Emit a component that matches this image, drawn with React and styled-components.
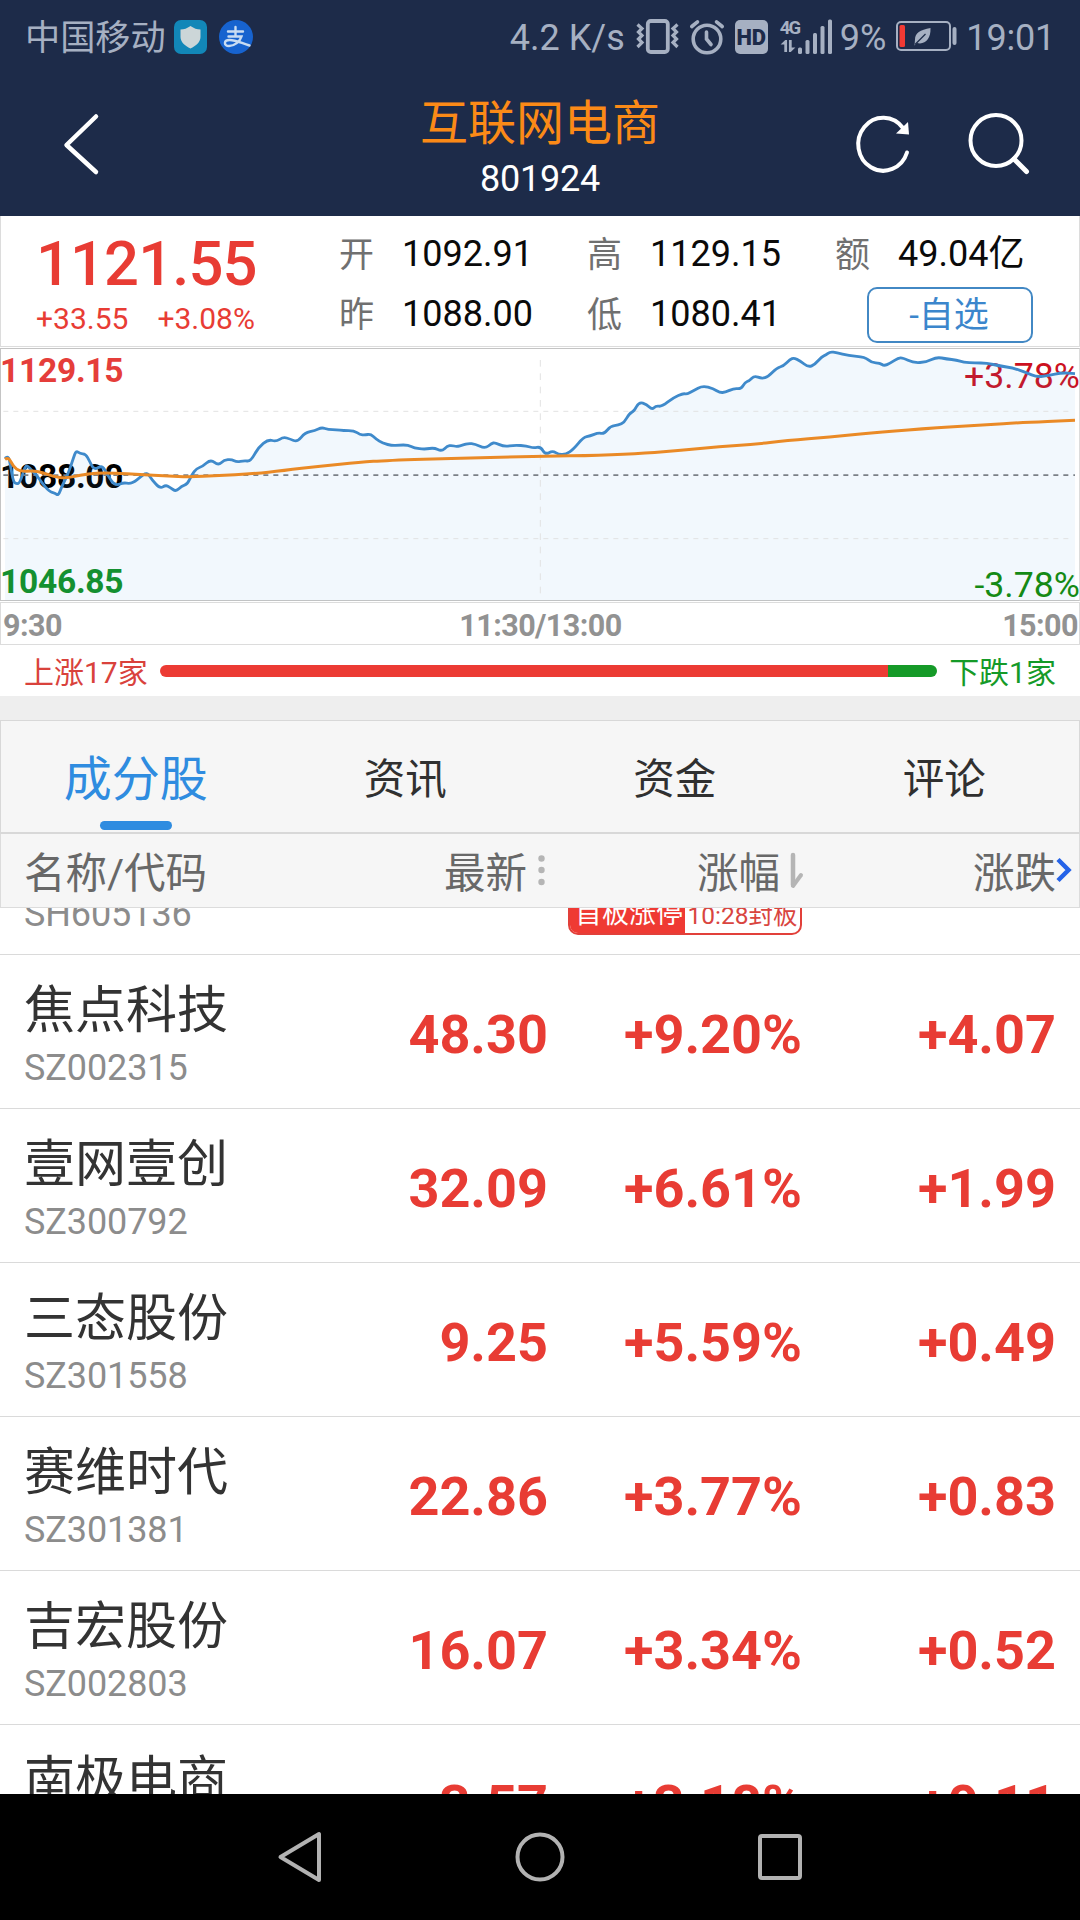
import React from 'react';
import styled, { createGlobalStyle } from 'styled-components';

const RED = '#e83c34';
const BLUE = '#2f8ce0';
const STATUS = '#a6b0c2';

const Global = createGlobalStyle`
  *, *::before, *::after { box-sizing: border-box; }
  body { margin: 0; background: #fff; }
`;

const Screen = styled.div`
  width: 1080px;
  height: 1920px;
  display: flex;
  flex-direction: column;
  overflow: hidden;
  background: #fff;
  font-family: Roboto, 'Noto Sans CJK SC', sans-serif;
  white-space: nowrap;
`;

const TopArea = styled.header`
  flex: none;
  height: 216px;
  background: #1d2b49;
  display: flex;
  flex-direction: column;
`;

const StatusBar = styled.div`
  height: 74px;
  padding: 0 25px 0 25px;
  display: flex;
  justify-content: space-between;
  color: ${STATUS};
  font-size: 36px;
`;

const StatusGroup = styled.div`
  display: flex;
  align-items: center;
`;

const StatusText = styled.span`
  padding-top: 2px;
  font-size: ${(p) => p.$size || 36}px;
  line-height: 74px;
  letter-spacing: ${(p) => p.$spacing || 0}px;
  margin-left: ${(p) => p.$left || 0}px;
`;

const Glyph = styled.svg`
  display: block;
  flex: none;
  overflow: visible;
  margin-left: ${(p) => p.$left || 0}px;
`;

const TitleBar = styled.div`
  flex: 1;
  display: grid;
  grid-template-columns: 300px 1fr 300px;
`;

const BackSlot = styled.div`
  padding: 40px 0 0 62px;
`;

const TitleBlock = styled.div`
  display: flex;
  flex-direction: column;
  align-items: center;
`;

const Title = styled.div`
  margin-top: 22px;
  font-size: 48px;
  line-height: 56px;
  color: #fb8a17;
`;

const TitleCode = styled.div`
  margin-top: 6px;
  font-size: 36px;
  line-height: 42px;
  letter-spacing: -0.2px;
  color: #fff;
`;

const Actions = styled.div`
  display: flex;
  align-items: flex-start;
  padding: 40px 0 0 74px;
  gap: 58px;
`;

const Quote = styled.section`
  flex: none;
  height: 131px;
  border: 1px solid #dcdcdc;
  border-top: 0;
  display: flex;
`;

const PriceBlock = styled.div`
  width: 338px;
  padding: 12px 0 0 35px;
  color: ${RED};
`;

const Price = styled.div`
  font-size: 61.5px;
  font-weight: 500;
  line-height: 72px;
  letter-spacing: -0.9px;
`;

const Deltas = styled.div`
  display: flex;
  gap: 29px;
  font-size: 30px;
  line-height: 36px;
  margin-top: 1px;
`;

const Stats = styled.div`
  display: grid;
  grid-template-columns: 248px 248px 230px;
  grid-template-rows: 60px 60px;
  padding-top: 8px;
`;

const Stat = styled.div`
  display: flex;
  align-items: center;
  gap: 28px;
  font-size: 36px;
  line-height: 60px;
  color: #0a0a0a;
`;

const StatLabel = styled.span`
  padding-top: 3px;
  font-size: 35px;
  line-height: 57px;
  color: #707070;
`;

const WatchButton = styled.button`
  width: 166px;
  height: 56px;
  margin: 3px 0 0 32px;
  padding: 2px 2px 0 0;
  border: 2px solid #4288c4;
  border-radius: 10px;
  background: #fff;
  font: 400 35px/50px Roboto, 'Noto Sans CJK SC', sans-serif;
  color: #3b86cc;
`;

const ChartPanel = styled.section`
  flex: none;
  position: relative;
  height: 253px;
  margin-top: 1px;
  border: 1px solid #c4c4c4;
  border-right-color: #dcdcdc;
`;

const ChartDrawing = styled.svg`
  display: block;
  position: relative;
  margin: -1px;
`;

const ChartLabel = styled.span`
  position: absolute;
  ${(p) => p.$side}: -1px;
  top: ${(p) => p.$top}px;
  color: ${(p) => p.$color};
  font-size: ${(p) => (p.$side === 'left' ? 33.5 : 35.7)}px;
  font-weight: ${(p) => (p.$side === 'left' ? 700 : 400)};
  letter-spacing: ${(p) => (p.$side === 'left' ? -0.25 : 0)}px;
  line-height: 40px;
`;

const TimeAxis = styled.div`
  flex: none;
  height: 43px;
  margin-top: 1px;
  border: 1px solid #dcdcdc;
  padding: 0 1px 0 2px;
  display: grid;
  grid-template-columns: 1fr auto 1fr;
  font-size: 30.5px;
  font-weight: 700;
  line-height: 46px;
  letter-spacing: -0.55px;
  color: #929292;
`;

const EndTime = styled.span`
  text-align: right;
`;

const Breadth = styled.div`
  flex: none;
  height: 51px;
  padding: 5px 24px 0;
  display: flex;
  align-items: center;
  gap: 12px;
  font-size: 30px;
  line-height: 46px;
`;

const BreadthText = styled.span`
  color: ${(p) => p.$color};
`;

const BreadthBar = styled.div`
  flex: 1;
  height: 12px;
  margin-top: -4px;
  border-radius: 6px;
  overflow: hidden;
  display: flex;
`;

const BreadthPart = styled.div`
  flex: ${(p) => p.$share};
  background: ${(p) => p.$color};
`;

const Gap = styled.div`
  flex: none;
  height: 24px;
  background: #eeeeee;
`;

const Tabs = styled.nav`
  flex: none;
  height: 114px;
  border: 1px solid #d8d8d8;
  border-bottom-width: 2px;
  background: #f6f6f6;
  display: grid;
  grid-template-columns: repeat(4, 1fr);
`;

const Tab = styled.div`
  display: flex;
  flex-direction: column;
  align-items: center;
  padding-top: 24px;
  font-size: ${(p) => (p.$active ? 48 : 41.5)}px;
  line-height: 70px;
  color: ${(p) => (p.$active ? BLUE : '#303030')};
`;

const TabMark = styled.div`
  width: 72px;
  height: 9px;
  margin-top: 6px;
  border-radius: 5px;
  background: ${BLUE};
`;

const TableHead = styled.div`
  flex: none;
  height: 74px;
  border: 1px solid #dcdcdc;
  border-top: 0;
  background: #f6f6f6;
  display: grid;
  grid-template-columns: 1fr 250px 251px 246px 23px;
  grid-template-rows: 73px;
  padding-left: 23px;
  font-size: 41.5px;
  line-height: 80px;
  color: #686868;
`;

const HeadCell = styled.div`
  display: flex;
  justify-content: ${(p) => (p.$start ? 'flex-start' : 'flex-end')};
`;

const List = styled.div`
  flex: 1;
  min-height: 0;
  overflow: hidden;
`;

const Row = styled.div`
  height: 154px;
  border-bottom: 1px solid #dadada;
  display: grid;
  grid-template-columns: 1fr 250px 254px 254px;
  padding: 0 24px;
`;

const ScrolledRow = styled(Row)`
  height: 47px;
  grid-template-rows: 46px;
  align-items: end;
`;

const NameCell = styled.div`
  padding-top: 23px;
`;

const Name = styled.div`
  font-size: 51px;
  line-height: 66px;
  color: #333;
`;

const Code = styled.div`
  font-size: 36px;
  line-height: 42px;
  margin-top: 3px;
  letter-spacing: -0.1px;
  color: #8c8c8c;
`;

const ScrolledCode = styled(Code)`
  margin: 0 0 19px;
`;

const Value = styled.div`
  text-align: right;
  font-size: 54px;
  font-weight: 700;
  line-height: 160px;
  color: ${RED};
`;

const Badge = styled.div`
  grid-column: 3;
  justify-self: end;
  width: 234px;
  height: 40px;
  margin-bottom: 19px;
  border: 2px solid #e2403a;
  border-radius: 10px;
  overflow: hidden;
  display: flex;
  font-size: 27px;
  line-height: 35px;
`;

const BadgeTag = styled.span`
  width: 115px;
  padding-left: 5px;
  background: #ef3a33;
  color: #fff;
`;

const BadgeTime = styled.span`
  flex: 1;
  text-align: center;
  font-size: 24.5px;
  line-height: 37px;
  color: #d9453f;
`;

const NavBar = styled.footer`
  flex: none;
  height: 126px;
  background: #000;
  display: flex;
  justify-content: center;
  align-items: center;
  gap: 190px;
`;

/* Intraday samples, three units per pixel in both directions. */
const PRICE = [
  [15, 355], [25, 345], [32, 380], [40, 425], [50, 432], [60, 428], [75, 380], [82, 376], [95, 392], [110, 405],
  [125, 428], [148, 455], [165, 459], [175, 467], [185, 440], [205, 400], [220, 355], [228, 332], [240, 341],
  [257, 342], [268, 362], [282, 390], [305, 377], [315, 390], [335, 425], [350, 436], [370, 428], [390, 431],
  [405, 424], [420, 412], [441, 396], [455, 418], [480, 446], [497, 435], [510, 442], [528, 455], [545, 438],
  [562, 433], [575, 405], [590, 385], [607, 380], [632, 358], [655, 376], [672, 360], [695, 358], [710, 366],
  [732, 362], [752, 364], [775, 322], [805, 298], [828, 305], [850, 291], [870, 297], [892, 306], [915, 278],
  [945, 272], [965, 262], [985, 269], [1010, 269], [1030, 272], [1062, 272], [1080, 284],
  [1095, 285], [1112, 282], [1128, 297], [1148, 310], [1178, 317], [1195, 315], [1225, 315], [1242, 324],
  [1275, 328], [1302, 323], [1325, 334], [1342, 318], [1355, 316], [1370, 320], [1390, 315], [1405, 310],
  [1425, 312], [1455, 326], [1475, 310], [1485, 308], [1512, 320], [1545, 315], [1580, 318], [1600, 324],
  [1622, 320], [1636, 344], [1658, 332], [1676, 344], [1698, 343], [1720, 328], [1750, 292], [1770, 288],
  [1795, 278], [1812, 282], [1832, 258], [1855, 256], [1873, 247], [1888, 220], [1902, 214], [1917, 186],
  [1940, 193], [1956, 209], [1968, 197], [1985, 200], [2020, 173], [2050, 160], [2060, 163], [2080, 152],
  [2108, 137], [2140, 146], [2160, 158],
  [2175, 157], [2202, 145], [2223, 147], [2235, 127], [2248, 122], [2263, 107], [2285, 116], [2305, 110],
  [2330, 84], [2350, 78], [2370, 58], [2382, 54], [2400, 62], [2425, 82], [2445, 73], [2465, 50], [2478, 45],
  [2490, 35], [2510, 38], [2545, 47], [2595, 51], [2615, 68], [2640, 69], [2652, 78], [2670, 70], [2695, 54],
  [2708, 53], [2740, 69], [2780, 66], [2810, 51], [2840, 57], [2870, 60], [2890, 67], [2925, 69], [2960, 69],
  [3000, 78], [3040, 84], [3080, 98], [3110, 111], [3145, 107], [3185, 98], [3225, 101],
];

const AVERAGE = [
  [15, 358], [25, 350], [40, 380], [60, 395], [100, 392], [130, 398], [160, 410], [200, 415], [240, 405],
  [290, 399], [340, 399], [420, 404], [500, 408], [570, 411], [650, 407], [760, 401], [850, 392], [960, 378],
  [1080, 367], [1160, 361], [1380, 354], [1620, 349], [1800, 346], [1940, 339], [2040, 331], [2160, 320],
  [2260, 313], [2360, 302], [2490, 291], [2610, 279], [2760, 267], [2960, 254], [3060, 248], [3225, 241],
];

/* Midpoint-smoothed path through the samples. */
const smooth = (pts) => {
  let d = `M${pts[0].join(' ')}`;
  for (let i = 1; i < pts.length - 1; i += 1) {
    const [x, y] = pts[i];
    const [nx, ny] = pts[i + 1];
    d += ` Q${x} ${y} ${(x + nx) / 2} ${(y + ny) / 2}`;
  }
  return `${d} L${pts[pts.length - 1].join(' ')}`;
};

const STOCKS = [
  ['焦点科技', 'SZ002315', '48.30', '+9.20%', '+4.07'],
  ['壹网壹创', 'SZ300792', '32.09', '+6.61%', '+1.99'],
  ['三态股份', 'SZ301558', '9.25', '+5.59%', '+0.49'],
  ['赛维时代', 'SZ301381', '22.86', '+3.77%', '+0.83'],
  ['吉宏股份', 'SZ002803', '16.07', '+3.34%', '+0.52'],
  ['南极电商', '', '3.57', '+3.18%', '+0.11'],
];

function ShieldIcon() {
  return (
    <Glyph $left={8} width="33" height="34" viewBox="0 0 33 34">
      <rect width="33" height="34" rx="7" fill="#1287b8" />
      <path d="M16.500 6 C20 8.500 23 9.500 26.500 9.500 V17 C26.500 22 22 26 16.500 28.500 C11 26 6.500 22 6.500 17 V9.500 C10 9.500 13 8.500 16.500 6Z" fill="#ccd6d8" />
    </Glyph>
  );
}

function PayIcon() {
  return (
    <Glyph $left={12} width="34" height="34" viewBox="0 0 34 34">
      <circle cx="17" cy="17" r="17" fill="#1763cf" />
      <g fill="none" stroke="#c9dcf2" strokeWidth="2.400" strokeLinecap="round">
        <path d="M9 11.500 H24 M16.500 7 V16 M9.500 16.500 H22.500 C21 21.500 15.500 26 10 26 C4.500 26 4.500 20 10.500 20 C17 20 22 23 30.500 25.500" />
      </g>
    </Glyph>
  );
}

function VibrateIcon() {
  return (
    <Glyph $left={11} width="43" height="36" viewBox="0 0 43 36" fill="none" stroke={STATUS}>
      <rect x="11.800" y="2" width="20" height="31" rx="3" strokeWidth="3.800" />
      <path d="M1.500 5.500 L6 9.500 L2.500 13 L6 16.500 L2.500 20 L6 23.500 L1.500 28 M41.500 5.500 L37 9.500 L40.500 13 L37 16.500 L40.500 20 L37 23.500 L41.500 28" strokeWidth="3.200" />
    </Glyph>
  );
}

function AlarmIcon() {
  return (
    <Glyph $left={11} width="34" height="37" viewBox="0 0 34 37" fill="none" stroke={STATUS} strokeWidth="3.600">
      <circle cx="17" cy="20" r="13.800" />
      <path d="M16.500 13 V20 L21 25.500 M1.800 7.500 L7.500 2.800 M32.200 7.500 L26.500 2.800" strokeLinecap="round" />
    </Glyph>
  );
}

const HdBadge = styled.span`
  width: 33px;
  height: 34px;
  margin-left: 11px;
  border-radius: 5px;
  background: ${STATUS};
  color: #1d2b49;
  font-size: 22px;
  font-weight: 900;
  line-height: 35px;
  text-align: center;
`;

const Network = styled.span`
  width: 18px;
  margin: -3px 0 0 12px;
  display: flex;
  flex-direction: column;
  gap: 2px;
  font-size: 18.5px;
  font-weight: 700;
  line-height: 19px;
  letter-spacing: -1.8px;
`;

function SignalIcon() {
  return (
    <Glyph width="35" height="37" viewBox="0 0 35 37" fill={STATUS}>
      <rect x="0" y="28.500" width="4" height="6.500" rx="1.500" />
      <rect x="7.500" y="21" width="4" height="14" rx="1.500" />
      <rect x="15" y="14" width="4" height="21" rx="1.500" />
      <rect x="22.500" y="7" width="4" height="28" rx="1.500" />
      <rect x="30" y="0.500" width="4" height="34.500" rx="1.500" />
    </Glyph>
  );
}

function BatteryIcon() {
  return (
    <Glyph $left={10} width="61" height="32" viewBox="0 0 61 32">
      <rect x="1" y="1" width="53" height="28" rx="4" fill="none" stroke={STATUS} strokeWidth="2" />
      <rect x="3.500" y="4" width="5.500" height="22" rx="1.500" fill="#f13a34" />
      <rect x="56.500" y="6" width="4" height="18" rx="2" fill={STATUS} />
      <path d="M34.500 7 C24 9 19 12 19 18.500 L18.500 24.500 L21 22 C29 24 35 18 34.500 7Z" fill={STATUS} />
      <path d="M19 23.500 L29.500 13" stroke="#1d2b49" strokeWidth="1.200" />
    </Glyph>
  );
}

export default function App() {
  const pricePath = smooth(PRICE);
  return (
    <Screen>
      <Global />
      <TopArea>
        <StatusBar>
          <StatusGroup>
            <StatusText $size={35.2}>中国移动</StatusText>
            <ShieldIcon />
            <PayIcon />
          </StatusGroup>
          <StatusGroup>
            <StatusText>4.2 K/s</StatusText>
            <VibrateIcon />
            <AlarmIcon />
            <HdBadge>HD</HdBadge>
            <Network>
              <span>4G</span>
              <Glyph width="16" height="12" viewBox="0 0 16 13" fill={STATUS}>
                <path d="M0 5 L5 0 H7 V13 H4 V5Z M9 0 H12 V8 H16 L11 13 H9Z" />
              </Glyph>
            </Network>
            <SignalIcon />
            <StatusText $left={7}>9%</StatusText>
            <BatteryIcon />
            <StatusText $left={9} $spacing={-0.2}>19:01</StatusText>
          </StatusGroup>
        </StatusBar>
        <TitleBar>
          <BackSlot>
            <Glyph width="40" height="62" viewBox="0 0 40 62" fill="none" stroke="#fff" strokeWidth="4.500" strokeLinecap="round" strokeLinejoin="round">
              <path d="M34 2.500 L4.500 31 L34 58" />
            </Glyph>
          </BackSlot>
          <TitleBlock>
            <Title>互联网电商</Title>
            <TitleCode>801924</TitleCode>
          </TitleBlock>
          <Actions>
            <Glyph width="56" height="62" viewBox="0 0 56 62" fill="none" stroke="#fff" strokeWidth="4" strokeLinecap="round">
              <path d="M53 38.500 A25 26.500 0 1 1 49 14" />
              <path d="M42 19.500 L55 20.500 L54 8Z" fill="#fff" stroke="none" />
            </Glyph>
            <Glyph width="62" height="62" viewBox="0 0 62 62" fill="none" stroke="#fff" strokeWidth="4" strokeLinecap="round">
              <circle cx="28" cy="26.500" r="25.500" />
              <path d="M46 45 L58.500 57.500" strokeWidth="5" />
            </Glyph>
          </Actions>
        </TitleBar>
      </TopArea>

      <Quote>
        <PriceBlock>
          <Price>1121.55</Price>
          <Deltas>
            <span>+33.55</span>
            <span>+3.08%</span>
          </Deltas>
        </PriceBlock>
        <Stats>
          <Stat><StatLabel>开</StatLabel>1092.91</Stat>
          <Stat><StatLabel>高</StatLabel>1129.15</Stat>
          <Stat><StatLabel>额</StatLabel>49.04亿</Stat>
          <Stat><StatLabel>昨</StatLabel>1088.00</Stat>
          <Stat><StatLabel>低</StatLabel>1080.41</Stat>
          <WatchButton>-自选</WatchButton>
        </Stats>
      </Quote>

      <ChartPanel>
        <ChartLabel $side="left" $top={2} $color="#e53e3a">1129.15</ChartLabel>
        <ChartLabel $side="left" $top={108} $color="#000">1088.00</ChartLabel>
        <ChartLabel $side="right" $top={7} $color="#cc1020">+3.78%</ChartLabel>
        <ChartDrawing width="1080" height="253" viewBox="0 24 3240 759" fill="none">
          <path d={`${pricePath} V781 H15Z`} fill="#4a9be8" fillOpacity="0.075" />
          <g stroke="#e2e2e2" strokeWidth="3">
            <path d="M10 214 H3205 M10 596 H3205" strokeDasharray="15 15" />
            <path d="M1621 60 V770" strokeDasharray="20 20" />
          </g>
          <path d="M10 405.500 H3225" stroke="#7b8086" strokeWidth="5" strokeDasharray="15 15" />
          <path d={pricePath} stroke="#3f8acb" strokeWidth="8.500" strokeLinejoin="round" />
          <path d={smooth(AVERAGE)} stroke="#ea8a26" strokeWidth="9" strokeLinejoin="round" />
        </ChartDrawing>
        <ChartLabel $side="left" $top={213} $color="#149030">1046.85</ChartLabel>
        <ChartLabel $side="right" $top={216} $color="#158a15">-3.78%</ChartLabel>
      </ChartPanel>

      <TimeAxis>
        <span>9:30</span>
        <span>11:30/13:00</span>
        <EndTime>15:00</EndTime>
      </TimeAxis>

      <Breadth>
        <BreadthText $color="#d9423c">上涨17家</BreadthText>
        <BreadthBar>
          <BreadthPart $share={728} $color="#ec3b34" />
          <BreadthPart $share={49} $color="#159a28" />
        </BreadthBar>
        <BreadthText $color="#159a28">下跌1家</BreadthText>
      </Breadth>

      <Gap />

      <Tabs>
        <Tab $active>
          成分股
          <TabMark />
        </Tab>
        <Tab>资讯</Tab>
        <Tab>资金</Tab>
        <Tab>评论</Tab>
      </Tabs>

      <TableHead>
        <HeadCell $start>名称/代码</HeadCell>
        <HeadCell>
          最新
          <Glyph $left={11} width="21" height="74" viewBox="0 0 21 74" fill="#b5b5b5">
            <circle cx="3.500" cy="24.500" r="3.200" />
            <circle cx="3.500" cy="36" r="3.200" />
            <circle cx="3.500" cy="48" r="3.200" />
          </Glyph>
        </HeadCell>
        <HeadCell>
          涨幅
          <Glyph $left={10} width="20" height="74" viewBox="0 0 20 74" fill="none" stroke="#b5b5b5" strokeLinecap="round">
            <path d="M3 21 V51" strokeWidth="4.500" />
            <path d="M3 52 L11 41" strokeWidth="4" />
          </Glyph>
        </HeadCell>
        <HeadCell>涨跌</HeadCell>
        <Glyph width="23" height="74" viewBox="0 0 23 74" fill="none" stroke="#2563e8" strokeWidth="4.500">
          <path d="M2 25.500 L12.500 36 L2 46.500" />
        </Glyph>
      </TableHead>

      <List>
        <ScrolledRow>
          <ScrolledCode>SH605136</ScrolledCode>
          <Badge>
            <BadgeTag>首板涨停</BadgeTag>
            <BadgeTime>10:28封板</BadgeTime>
          </Badge>
        </ScrolledRow>
        {STOCKS.map(([name, code, last, pct, change]) => (
          <Row key={name}>
            <NameCell>
              <Name>{name}</Name>
              {code && <Code>{code}</Code>}
            </NameCell>
            <Value>{last}</Value>
            <Value>{pct}</Value>
            <Value>{change}</Value>
          </Row>
        ))}
      </List>

      <NavBar>
        <Glyph width="50" height="52" viewBox="0 0 50 52" fill="none" stroke="#b2b2b2" strokeWidth="4" strokeLinejoin="round">
          <path d="M44 3 V49 L5.500 26Z" />
        </Glyph>
        <Glyph width="50" height="50" viewBox="0 0 50 50" fill="none" stroke="#b2b2b2" strokeWidth="4">
          <circle cx="25" cy="25" r="22.500" />
        </Glyph>
        <Glyph width="50" height="50" viewBox="0 0 50 50" fill="none" stroke="#b2b2b2" strokeWidth="4">
          <rect x="5" y="4" width="40" height="42" rx="2" />
        </Glyph>
      </NavBar>
    </Screen>
  );
}
